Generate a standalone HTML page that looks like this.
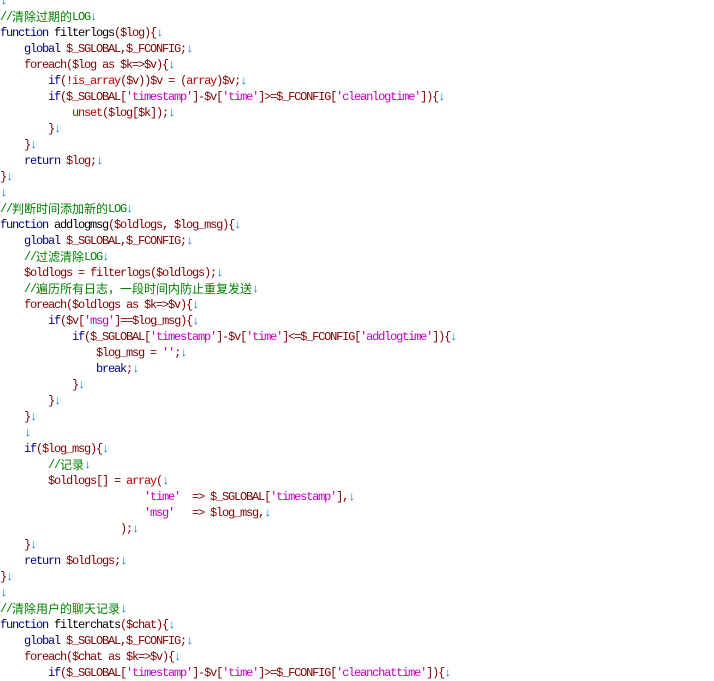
<!DOCTYPE html>
<html><head><meta charset="utf-8"><style>
html,body{margin:0;padding:0;background:#fff;width:714px;height:676px;overflow:hidden}
pre{margin:0;position:absolute;left:0;top:-7px;font-family:"Liberation Mono",monospace;font-size:12px;line-height:16px;letter-spacing:-1.2px;color:#800000;white-space:pre}
.k{color:#000080}.c{color:#008000}.s{color:#c000c0}.f{color:#c00000}.a{color:#0070d0}.b{color:#000}
.z{letter-spacing:0;font-family:"Noto Sans CJK SC",sans-serif;vertical-align:top;line-height:16px;display:inline-block;height:16px}
</style></head><body><pre><span class="a">↓</span>
<span class="c">//<span class="z">清除过期的</span>LOG</span><span class="a">↓</span>
<span class="k">function</span> <span class="b">filterlogs</span>($log){<span class="a">↓</span>
    <span class="k">global</span> $_SGLOBAL,$_FCONFIG;<span class="a">↓</span>
    foreach($log as $k=&gt;$v){<span class="a">↓</span>
        <span class="k">if</span>(!<span class="f">is_array</span>($v))$v = (<span class="f">array</span>)$v;<span class="a">↓</span>
        <span class="k">if</span>($_SGLOBAL[<span class="s">'timestamp'</span>]-$v[<span class="s">'time'</span>]&gt;=$_FCONFIG[<span class="s">'cleanlogtime'</span>]){<span class="a">↓</span>
            <span class="f">unset</span>($log[$k]);<span class="a">↓</span>
        }<span class="a">↓</span>
    }<span class="a">↓</span>
    <span class="k">return</span> $log;<span class="a">↓</span>
}<span class="a">↓</span>
<span class="a">↓</span>
<span class="c">//<span class="z">判断时间添加新的</span>LOG</span><span class="a">↓</span>
<span class="k">function</span> <span class="b">addlogmsg</span>($oldlogs, $log_msg){<span class="a">↓</span>
    <span class="k">global</span> $_SGLOBAL,$_FCONFIG;<span class="a">↓</span>
    <span class="c">//<span class="z">过滤清除</span>LOG</span><span class="a">↓</span>
    $oldlogs = filterlogs($oldlogs);<span class="a">↓</span>
    <span class="c">//<span class="z">遍历所有日志，一段时间内防止重复发送</span></span><span class="a">↓</span>
    foreach($oldlogs as $k=&gt;$v){<span class="a">↓</span>
        <span class="k">if</span>($v[<span class="s">'msg'</span>]==$log_msg){<span class="a">↓</span>
            <span class="k">if</span>($_SGLOBAL[<span class="s">'timestamp'</span>]-$v[<span class="s">'time'</span>]&lt;=$_FCONFIG[<span class="s">'addlogtime'</span>]){<span class="a">↓</span>
                $log_msg = <span class="s">''</span>;<span class="a">↓</span>
                <span class="k">break</span>;<span class="a">↓</span>
            }<span class="a">↓</span>
        }<span class="a">↓</span>
    }<span class="a">↓</span>
    <span class="a">↓</span>
    <span class="k">if</span>($log_msg){<span class="a">↓</span>
        <span class="c">//<span class="z">记录</span></span><span class="a">↓</span>
        $oldlogs[] = <span class="f">array</span>(<span class="a">↓</span>
                        <span class="s">'time'</span>  =&gt; $_SGLOBAL[<span class="s">'timestamp'</span>],<span class="a">↓</span>
                        <span class="s">'msg'</span>   =&gt; $log_msg,<span class="a">↓</span>
                    );<span class="a">↓</span>
    }<span class="a">↓</span>
    <span class="k">return</span> $oldlogs;<span class="a">↓</span>
}<span class="a">↓</span>
<span class="a">↓</span>
<span class="c">//<span class="z">清除用户的聊天记录</span></span><span class="a">↓</span>
<span class="k">function</span> <span class="b">filterchats</span>($chat){<span class="a">↓</span>
    <span class="k">global</span> $_SGLOBAL,$_FCONFIG;<span class="a">↓</span>
    foreach($chat as $k=&gt;$v){<span class="a">↓</span>
        <span class="k">if</span>($_SGLOBAL[<span class="s">'timestamp'</span>]-$v[<span class="s">'time'</span>]&gt;=$_FCONFIG[<span class="s">'cleanchattime'</span>]){<span class="a">↓</span>
</pre></body></html>
